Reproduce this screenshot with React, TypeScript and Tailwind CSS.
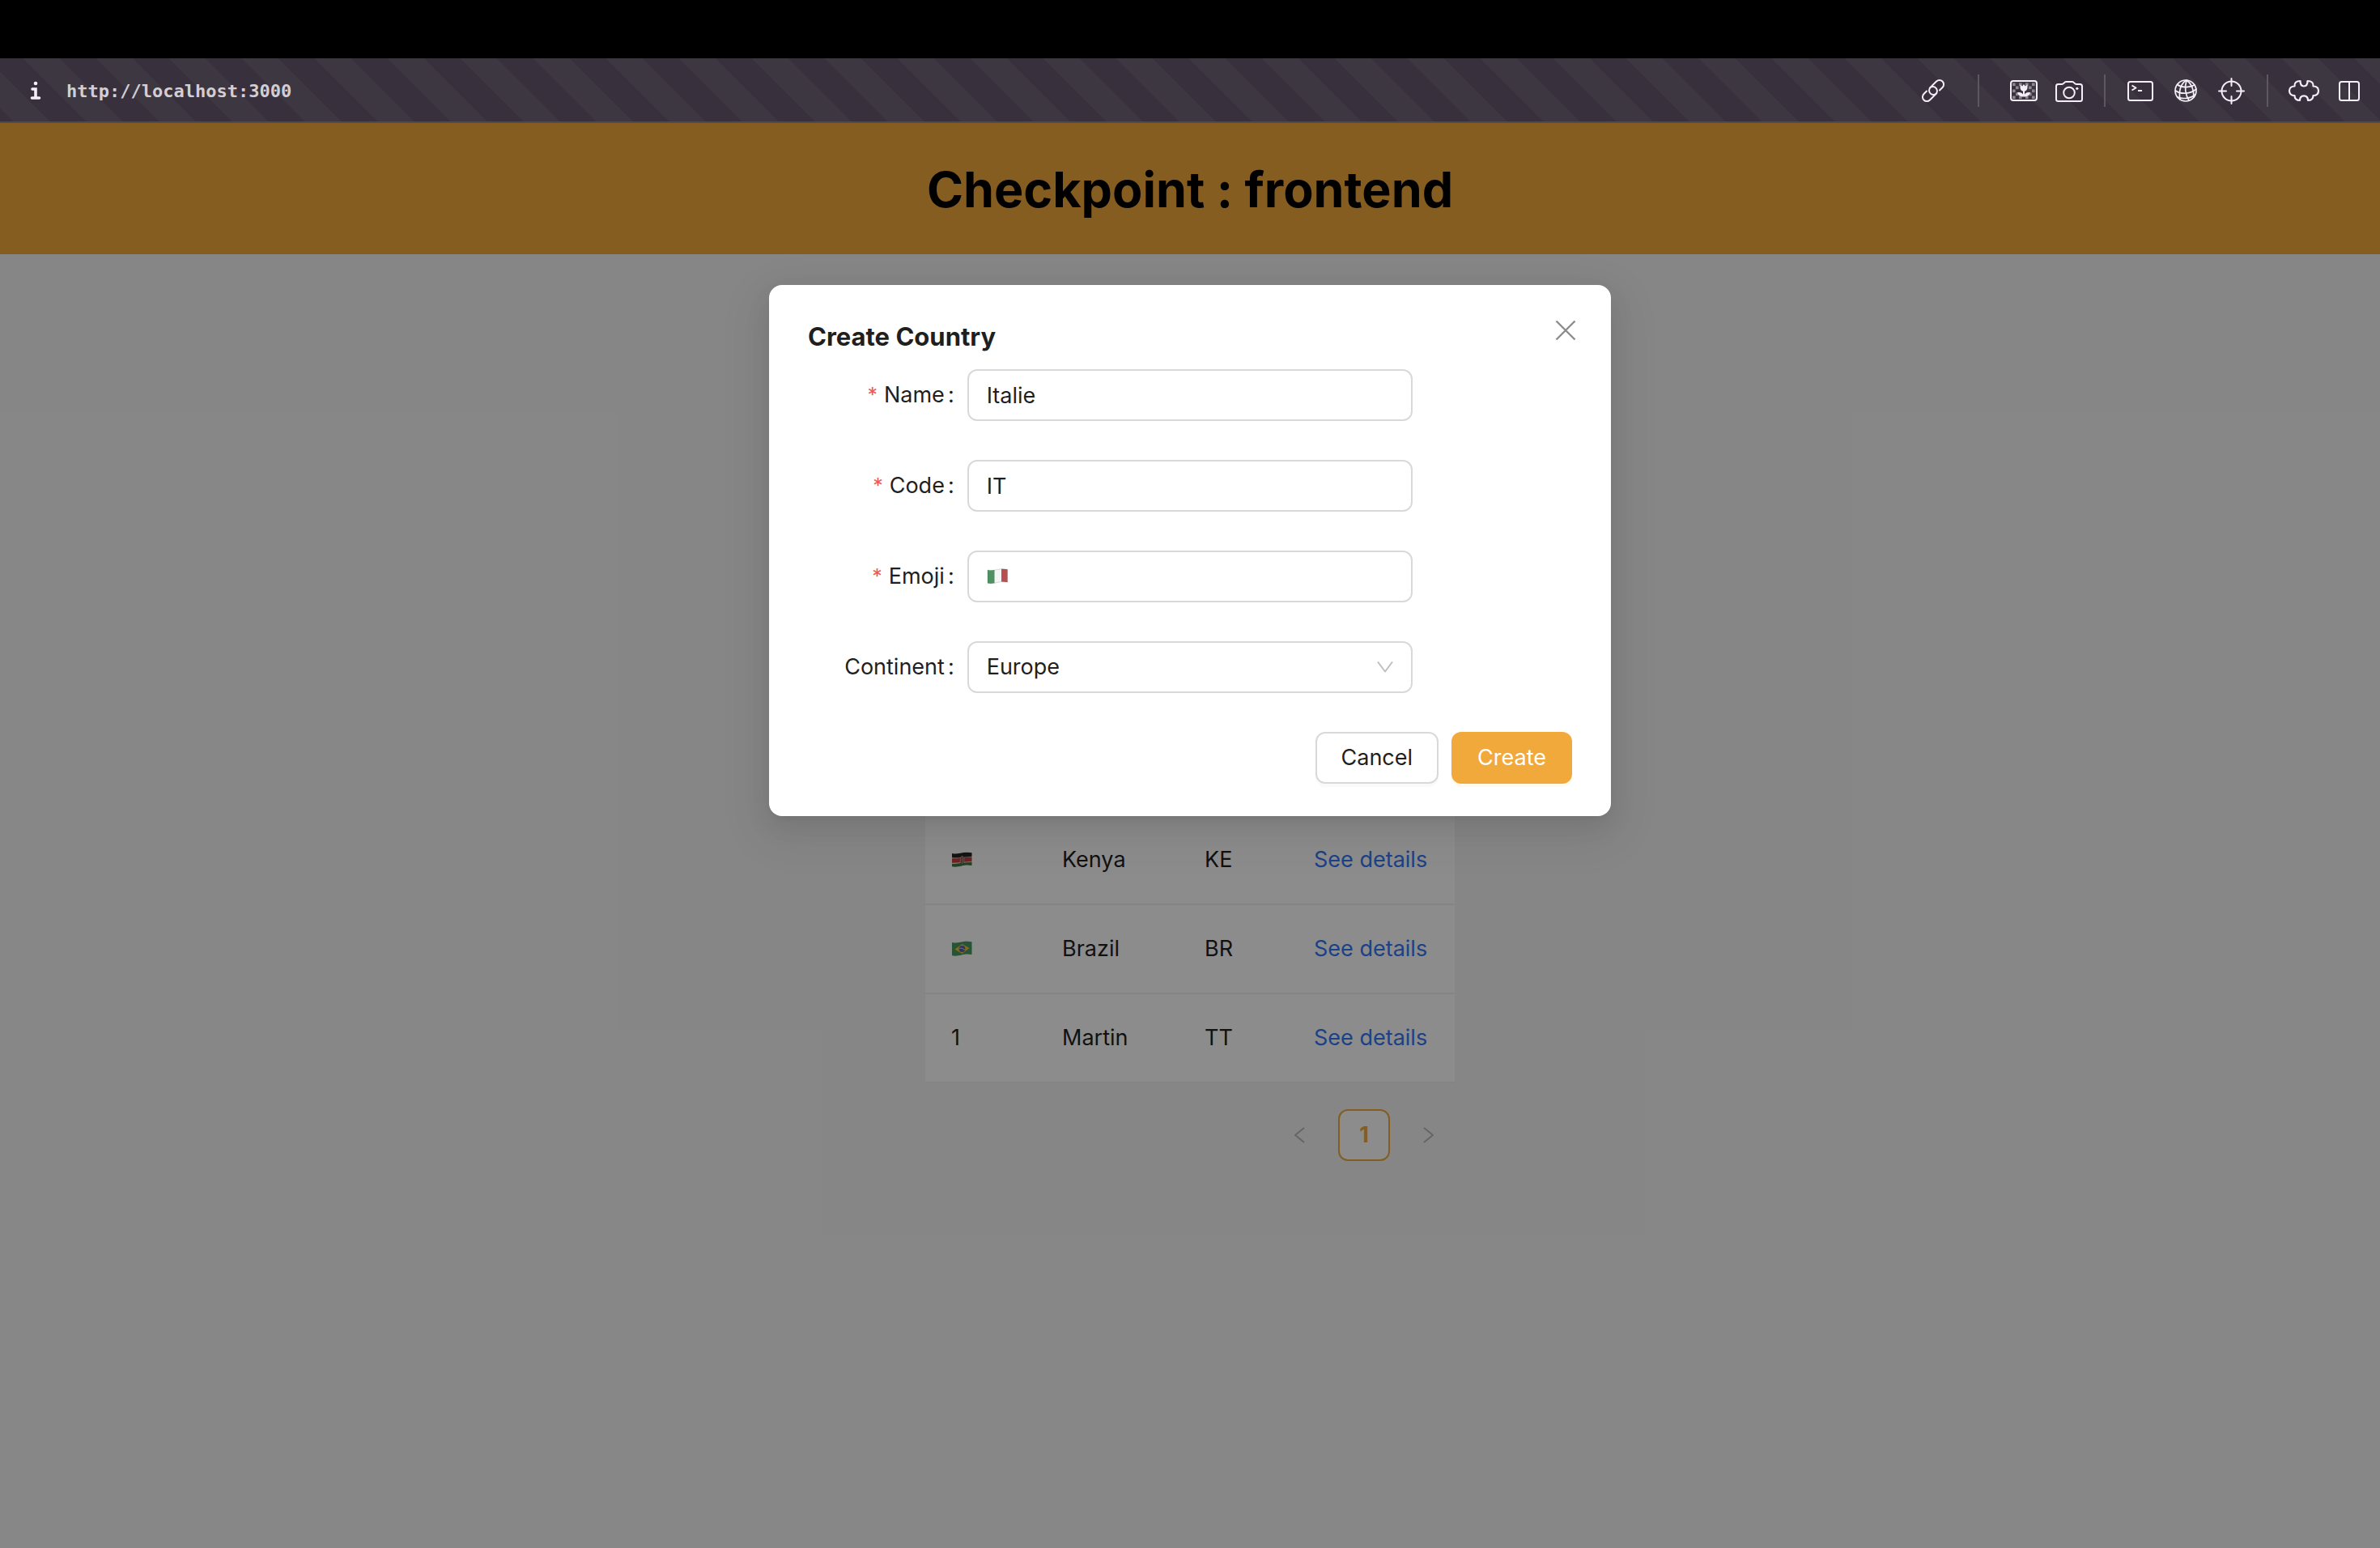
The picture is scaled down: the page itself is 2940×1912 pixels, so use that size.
import React from "react";

const stroke = {
  fill: "none",
  stroke: "currentColor",
  strokeWidth: 2,
  strokeLinecap: "round" as const,
  strokeLinejoin: "round" as const,
};

function LinkIcon() {
  return (
    <svg width="40" height="40" viewBox="0 0 40 40" {...stroke}>
      <g transform="translate(20 20) rotate(-45)">
        <path d="M-6 -5.300 H-11 a5.300 5.300 0 0 0 0 10.600 H-0.500 a5.300 5.300 0 0 0 0 -10.600" />
        <path d="M6 5.300 H11 a5.300 5.300 0 0 0 0 -10.600 H0.500 a5.300 5.300 0 0 0 0 10.600" />
      </g>
    </svg>
  );
}

function PictureIcon() {
  const cells: [number, number][] = [
    [6, 10], [14, 10], [22, 10], [30, 10],
    [10, 14], [26, 14],
    [6, 18], [30, 18],
    [10, 22], [26, 22],
    [6, 26], [14, 26], [22, 26], [30, 26],
  ];
  return (
    <svg width="40" height="40" viewBox="0 0 40 40" {...stroke}>
      {cells.map(([x, y]) => (
        <rect key={`${x}-${y}`} x={x} y={y + 0.5} width="3.6" height="3.6" fill="#8d8693" stroke="none" />
      ))}
      <rect x="4" y="8" width="32" height="24" rx="3" />
      <path d="M15.5 12.5 l2.6 2 l1.9 -2.4 l1.9 2.4 l2.6 -2 v3.8 a4.5 4.5 0 0 1 -9 0 z" fill="currentColor" stroke="none" />
      <path d="M20 18 V26" />
      <path d="M20 27.500 c-4 0 -7 -1.500 -8 -5.300 c4.500 -0.500 7.500 1.300 8 5.300 z M20 27.500 c4 0 7 -1.500 8 -5.300 c-4.500 -0.500 -7.500 1.300 -8 5.300 z" fill="currentColor" stroke="none" />
    </svg>
  );
}

function CameraIcon() {
  return (
    <svg width="40" height="40" viewBox="0 0 40 40" {...stroke}>
      <path d="M4 14.500 a2.500 2.500 0 0 1 2.500 -2.500 H11 c2.500 0 3 -3 5 -3 h8 c2 0 2.500 3 5 3 h4.500 a2.500 2.500 0 0 1 2.500 2.500 V30.500 a2.500 2.500 0 0 1 -2.500 2.500 h-27 a2.500 2.500 0 0 1 -2.500 -2.500 z" />
      <circle cx="20" cy="22.500" r="6.800" />
      <circle cx="29.800" cy="17.300" r="1.600" fill="currentColor" stroke="none" />
    </svg>
  );
}

function TerminalIcon() {
  return (
    <svg width="40" height="40" viewBox="0 0 40 40" {...stroke}>
      <rect x="5" y="9" width="30" height="23" rx="2.500" />
      <path d="M9.500 13.500 L14.500 16.500 L9.500 19.500 M17 20 H22" strokeLinecap="butt" />
    </svg>
  );
}

function GlobeIcon() {
  return (
    <svg width="40" height="40" viewBox="0 0 40 40" {...stroke} strokeWidth={1.7}>
      <circle cx="20" cy="20" r="13" />
      <path d="M21 7 C14 11 11 20 13 31 M21 7 C19 14 19 24 24 32 M21 7 C27 11 30 18 30 28" />
      <path d="M9.500 12.500 C16 17 25 16 31 13 M7.500 20 C14 25 26 24 33 18 M10 28 C16 30.500 26 30 31.500 25" />
    </svg>
  );
}

function TargetIcon() {
  return (
    <svg width="40" height="40" viewBox="0 0 40 40" {...stroke}>
      <circle cx="20.500" cy="20.500" r="12" />
      <path d="M20.500 5 V14 M20.500 27 V36 M5 20.500 H14 M27 20.500 H36" />
    </svg>
  );
}

function PuzzleIcon() {
  return (
    <svg width="40" height="40" viewBox="0 0 40 40" {...stroke} strokeWidth={2.2}>
      <path d="M8.500 14.500 C8 10.500 10.500 8 15.500 8 C15.500 12.500 17 14.500 20 14.500 C23 14.500 24.500 12.500 24.500 8 C29.500 8 32 10.500 31.500 14.500 C36 14.500 38 17 38 20.200 C38 23.500 36 26 31.500 26 C31.500 30 29.500 32 25 32 C25 28 23.500 26.300 20 26.300 C16.500 26.300 15 28 15 32 C10.500 32 8.500 30 8.500 26 C4.500 26 2 23.500 2 20.200 C2 17 4.500 14.500 8.500 14.500 z" />
    </svg>
  );
}

function SplitIcon() {
  return (
    <svg width="40" height="40" viewBox="0 0 40 40" {...stroke}>
      <rect x="8" y="9" width="24" height="23" rx="2.500" />
      <path d="M20 9 V32" strokeLinecap="butt" />
    </svg>
  );
}

function ToolButton({ label, children }: { label: string; children: React.ReactNode }) {
  return (
    <button type="button" aria-label={label} className="size-10">
      {children}
    </button>
  );
}

const flagShape = "M1 2 C6 3.500 12 1.500 17 0.800 C20 0.500 23 0.800 25.500 1.300 V17 C20 16 17 16.500 13 17.500 C9 18.700 4 19 1 18.300 z";

function ItalyFlag() {
  return (
    <svg width="26" height="20" viewBox="0 0 26 20" role="img" aria-label="Flag of Italy">
      <clipPath id="italy"><path d={flagShape} /></clipPath>
      <g clipPath="url(#italy)">
        <rect width="26" height="20" fill="#f4f4f4" />
        <rect width="9.500" height="20" fill="#4f9163" />
        <rect x="18" width="9" height="20" fill="#b84e50" />
      </g>
      <path d={flagShape} fill="none" stroke="#000" strokeOpacity="0.2" strokeWidth="0.700" />
    </svg>
  );
}

function KenyaFlag() {
  return (
    <svg width="26" height="20" viewBox="0 0 26 20" role="img" aria-label="Flag of Kenya">
      <clipPath id="kenya"><path d={flagShape} /></clipPath>
      <g clipPath="url(#kenya)" fill="none">
        <rect width="26" height="20" fill="#f0f0f0" />
        <path d="M0 4 C8 6 16 2.500 26 3.200" stroke="#262626" strokeWidth="6" />
        <path d="M0 10.800 C8 12 16 9 26 9.700" stroke="#c8403c" strokeWidth="5.500" />
        <path d="M0 17.300 C8 18 16 15 26 15.500" stroke="#3c7a3c" strokeWidth="5" />
        <ellipse cx="13.500" cy="10" rx="2.600" ry="5" fill="#b02c2c" />
        <path d="M13.500 5 V15 M11.300 6.500 V13.500 M15.700 6.500 V13.500" stroke="#d8d0d0" strokeWidth="0.700" />
      </g>
    </svg>
  );
}

function BrazilFlag() {
  return (
    <svg width="26" height="20" viewBox="0 0 26 20" role="img" aria-label="Flag of Brazil">
      <clipPath id="brazil"><path d={flagShape} /></clipPath>
      <g clipPath="url(#brazil)">
        <rect width="26" height="20" fill="#4a9a63" />
        <path d="M4.500 10.500 L13.500 4 L22.500 9 L13.500 16 z" fill="#e8c83c" />
        <circle cx="13.500" cy="10" r="3.900" fill="#5a5fa8" />
        <path d="M10 9.200 Q13.500 8.300 17 11.300" stroke="#ccd" strokeWidth="1" fill="none" />
      </g>
    </svg>
  );
}

function BrowserBar() {
  return (
    <nav className="flex h-20 items-center border-b-2 border-[#4f4a54] bg-[#38313d] bg-[linear-gradient(45deg,#38313d_25%,#3d3742_25%,#3d3742_50%,#38313d_50%,#38313d_75%,#3d3742_75%)] bg-[length:90px_90px] bg-[position:-16px_0px] pt-0.5 pr-[18px] pl-[34px] text-[#f3eef8]">
      <button type="button" aria-label="Site information" className="w-5">
        <svg width="20" height="24" viewBox="0 0 20 24" fill="none" stroke="currentColor" strokeWidth="3.600" strokeLinecap="round">
          <circle cx="10" cy="3" r="2.300" fill="currentColor" stroke="none" />
          <path d="M6 10 H10 V20.500 M5.500 21 H14.500" />
        </svg>
      </button>
      <span className="ml-7 pt-0.5 font-['DejaVu_Sans_Mono',monospace] text-[22px] leading-8 font-bold text-[#d2cfd4]">http://localhost:3000</span>
      <div className="ml-auto flex items-center gap-4">
        <ToolButton label="Copy link"><LinkIcon /></ToolButton>
        <span className="mx-[19px] h-10 w-0.5 bg-[#5d5762]" />
        <ToolButton label="Images"><PictureIcon /></ToolButton>
        <ToolButton label="Capture"><CameraIcon /></ToolButton>
        <span className="mx-[7px] h-10 w-0.5 bg-[#5d5762]" />
        <ToolButton label="Console"><TerminalIcon /></ToolButton>
        <ToolButton label="Network"><GlobeIcon /></ToolButton>
        <ToolButton label="Inspect"><TargetIcon /></ToolButton>
        <span className="mx-2 h-10 w-0.5 bg-[#5d5762]" />
        <ToolButton label="Extensions"><PuzzleIcon /></ToolButton>
        <ToolButton label="Split view"><SplitIcon /></ToolButton>
      </div>
    </nav>
  );
}

const countries = [
  { flag: <KenyaFlag />, name: "Kenya", code: "KE" },
  { flag: <BrazilFlag />, name: "Brazil", code: "BR" },
  { flag: "1", name: "Martin", code: "TT" },
];

function CountryTable() {
  return (
    <section className="mx-auto w-[654px] pt-[694px]">
      <table className="w-full table-fixed border-separate border-spacing-0 bg-white text-left">
        <colgroup>
          <col className="w-[137px]" />
          <col className="w-[176px]" />
          <col className="w-[135px]" />
          <col />
        </colgroup>
        <tbody>
          {countries.map((c) => (
            <tr key={c.code} className="h-[110px]">
              <td className="border-b-2 border-[#f0f0f0] px-8">{c.flag}</td>
              <td className="border-b-2 border-[#f0f0f0] px-8">{c.name}</td>
              <td className="border-b-2 border-[#f0f0f0] px-8">{c.code}</td>
              <td className="border-b-2 border-[#f0f0f0] px-8 whitespace-nowrap">
                <a href="#details" className="text-[#3575f6]">See details</a>
              </td>
            </tr>
          ))}
        </tbody>
      </table>
      <div className="mt-8 flex justify-end gap-4">
        <button type="button" aria-label="Previous page" className="flex size-16 items-center justify-center text-[#b8b8b8]">
          <svg width="14" height="20" viewBox="0 0 14 20" {...stroke} strokeLinecap="butt"><path d="M13 1 L2 10 L13 19" /></svg>
        </button>
        <button type="button" className="size-16 rounded-xl border-2 border-[#f2a93b] bg-white font-bold text-[#f2a93b]">1</button>
        <button type="button" aria-label="Next page" className="flex size-16 items-center justify-center text-[#b8b8b8]">
          <svg width="14" height="20" viewBox="0 0 14 20" {...stroke} strokeLinecap="butt"><path d="M1 1 L12 10 L1 19" /></svg>
        </button>
      </div>
    </section>
  );
}

function Field({ id, label, required, children }: { id: string; label: string; required?: boolean; children: React.ReactNode }) {
  return (
    <div className="grid h-16 grid-cols-24 items-center">
      <label htmlFor={id} className="col-span-5 flex items-center justify-end pr-4">
        {required && <span className="mr-2 text-[25px] text-[#eb5b56]">*</span>}
        {label}
        <span className="ml-1">:</span>
      </label>
      <div className="relative col-span-14">{children}</div>
    </div>
  );
}

const inputClass = "block h-16 w-full appearance-none rounded-xl border-2 border-[#d9d9d9] bg-white px-[22px] outline-none";

function CreateCountryDialog() {
  return (
    <div role="dialog" aria-modal="true" aria-labelledby="dialog-title" className="relative w-[1040px] rounded-2xl bg-white px-12 py-10 shadow-[0_12px_32px_0_rgba(0,0,0,0.08),0_6px_12px_-8px_rgba(0,0,0,0.12),0_18px_56px_16px_rgba(0,0,0,0.05)]">
      <button type="button" aria-label="Close" className="absolute top-[34px] right-[34px] flex size-11 items-center justify-center text-[#8c8c8c]">
        <svg width="26" height="26" viewBox="0 0 26 26" {...stroke} strokeWidth={2.4} strokeLinecap="butt"><path d="M1.500 1.500 L24.500 24.500 M24.500 1.500 L1.500 24.500" /></svg>
      </button>
      <h2 id="dialog-title" className="mb-4 text-[31px] leading-[48px] font-bold">Create Country</h2>
      <form className="flex flex-col gap-12">
        <Field id="name" label="Name" required>
          <input id="name" defaultValue="Italie" className={inputClass} />
        </Field>
        <Field id="code" label="Code" required>
          <input id="code" defaultValue="IT" className={inputClass} />
        </Field>
        <Field id="emoji" label="Emoji" required>
          <input id="emoji" className={inputClass} />
          <span className="pointer-events-none absolute inset-y-0 left-6 flex items-center"><ItalyFlag /></span>
        </Field>
        <Field id="continent" label="Continent">
          <select id="continent" defaultValue="Europe" className={inputClass}>
            <option>Europe</option>
          </select>
          <span className="pointer-events-none absolute inset-y-0 right-6 flex items-center text-[#bfbfbf]">
            <svg width="20" height="14" viewBox="0 0 20 14" {...stroke} strokeLinecap="butt"><path d="M1 0.500 L10 12.500 L19 0.500" /></svg>
          </span>
        </Field>
        <div className="flex justify-end gap-4">
          <button type="button" className="h-16 rounded-xl border-2 border-[#d9d9d9] bg-white px-[30px] shadow-[0_4px_0_rgba(0,0,0,0.02)]">Cancel</button>
          <button type="button" className="h-16 rounded-xl bg-[#f2a93b] px-8 text-white shadow-[0_4px_0_#fffbeb]">Create</button>
        </div>
      </form>
    </div>
  );
}

export default function App() {
  return (
    <div className="flex min-h-screen flex-col bg-black pt-[72px] font-['Inter',sans-serif] text-[27px] leading-[44px] text-[#1f1f1f]">
      <BrowserBar />
      <div className="relative flex-1 bg-[#f5f5f5]">
        <header className="bg-[#f2a93b] pt-[42px] pb-10 text-center">
          <h1 className="text-[61px] leading-[80px] font-bold text-black">Checkpoint : frontend</h1>
        </header>
        <main>
          <CountryTable />
        </main>
        <div className="absolute inset-0 flex items-start justify-center bg-black/45 pt-[200px]">
          <CreateCountryDialog />
        </div>
      </div>
    </div>
  );
}
